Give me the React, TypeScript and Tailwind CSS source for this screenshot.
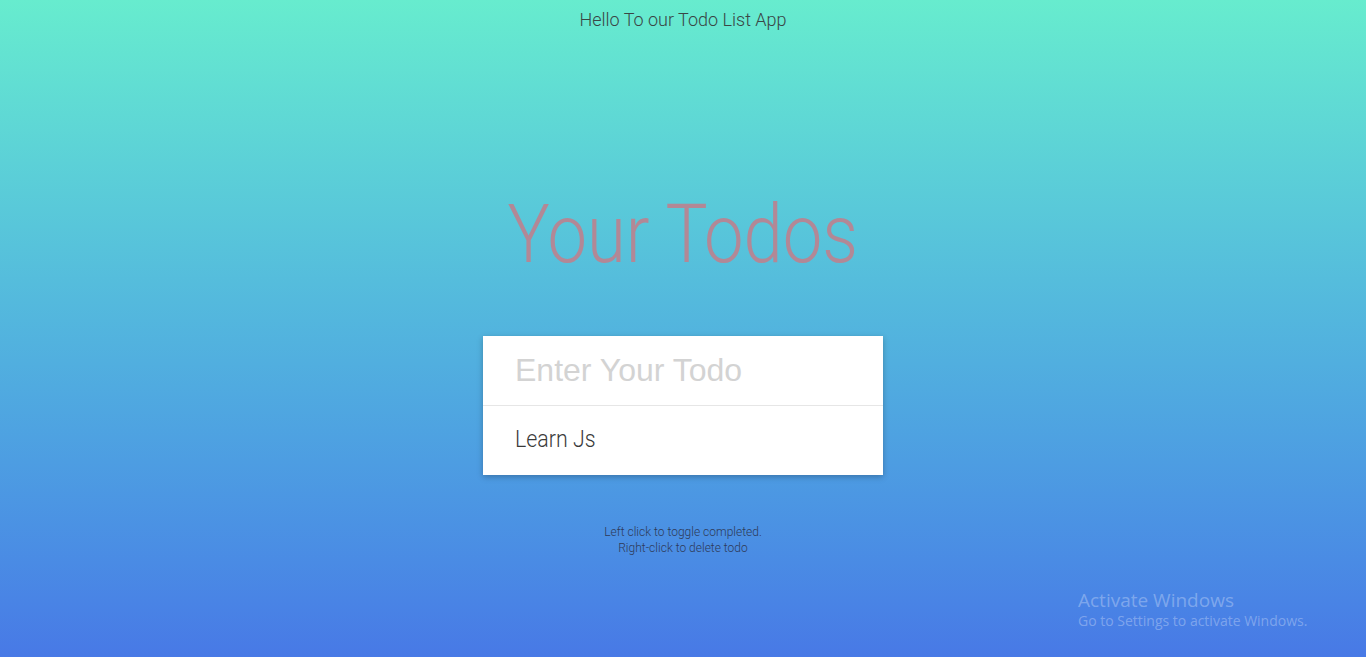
export default function App() {
  return (
    <div className="relative min-h-[657px] w-full overflow-hidden bg-gradient-to-b from-[#67ecce] to-[#4879e6] font-['Roboto',sans-serif]">
      <header className="pt-[8px] text-center text-[18px] leading-[24px] font-light text-[#3a4645]">
        Hello To our Todo List App
      </header>

      <main className="flex flex-col items-center">
        <h1 className="mt-[161px] inline-block origin-center scale-x-[0.86] text-[82px] leading-[82px] font-light text-[#b28896]">
          Your Todos
        </h1>

        <section className="mt-[61px] w-[400px] bg-white shadow-[0_2px_6px_rgba(0,0,0,0.25)]">
          <input
            type="text"
            placeholder="Enter Your Todo"
            className="block h-[70px] w-full border-b border-[#e6e6e6] px-[32px] font-['Liberation_Sans',sans-serif] text-[32px] text-[#333] outline-none placeholder:text-[#d3d3d3]"
          />
          <ul>
            <li className="flex h-[69px] cursor-pointer items-center px-[32px] pb-[3px] text-[24px] font-light text-[#3a3a3a]">
              <span className="inline-block origin-left scale-x-[0.89]">Learn Js</span>
            </li>
          </ul>
        </section>

        <div className="mt-[49px] text-center text-[12px] leading-[16px] font-light text-[#2e3a58]">
          <p>Left click to toggle completed.</p>
          <p>Right-click to delete todo</p>
        </div>
      </main>

      <div className="absolute top-[588px] left-[1078px] font-['Open_Sans',sans-serif] text-white/30">
        <p className="text-[19px] leading-[24px]">Activate Windows</p>
        <p className="text-[14px] leading-[18px]">Go to Settings to activate Windows.</p>
      </div>
    </div>
  );
}
